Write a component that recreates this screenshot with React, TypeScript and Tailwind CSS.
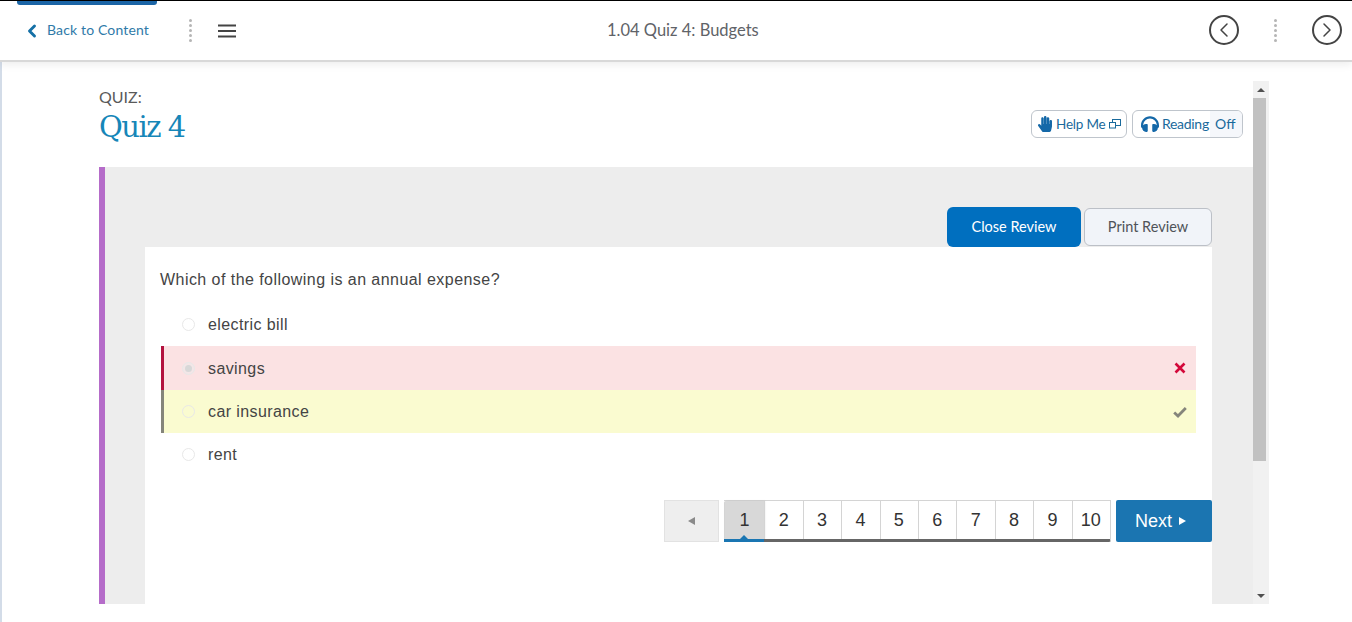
import { ChevronLeft, ChevronRight } from "lucide-react";
import { FaHandPaper, FaHeadphones } from "react-icons/fa";

const pages = ["1", "2", "3", "4", "5", "6", "7", "8", "9", "10"];

function Radio({ checked }: { checked?: boolean }) {
  return (
    <span className={`w-[13px] h-[13px] rounded-full border border-[#e8e8e8] flex items-center justify-center shrink-0 ${checked ? "bg-[#f3e6e7]" : ""}`}>
      {checked && <span className="w-[7px] h-[7px] rounded-full bg-[#d8d8d8]" />}
    </span>
  );
}

function Dots() {
  return (
    <div className="flex flex-col gap-[2px]">
      {[0, 1, 2, 3, 4].map((i) => (
        <span key={i} className="w-[3px] h-[3px] rounded-full bg-[#b5b5b5]" />
      ))}
    </div>
  );
}

function Option({ label, tone, checked, mark, className }: { label: string; tone?: "wrong" | "right"; checked?: boolean; mark?: React.ReactNode; className?: string }) {
  const cls =
    tone === "wrong"
      ? "bg-[#fbe2e3] border-l-[3px] border-[#b3123f] pr-[10px]"
      : tone === "right"
        ? "bg-[#fafbd0] border-l-[3px] border-[#85857b] pr-[9px]"
        : "border-l-[3px] border-transparent pr-[10px]";
  return (
    <div className={`flex items-center pl-[18px] ${cls} ${className ?? "h-[43px]"}`}>
      <Radio checked={checked} />
      <span className={`ml-[13px] text-[16px] text-[#444] tracking-[0.4px] ${tone === "wrong" ? "pt-[2px]" : ""}`}>{label}</span>
      <span className="ml-auto">{mark}</span>
    </div>
  );
}

export default function App() {
  return (
    <div className="w-[1352px] h-[622px] overflow-hidden bg-white flex flex-col font-['Liberation_Sans',sans-serif]">
      {/* Top bar */}
      <header className="relative h-[62px] shrink-0 border-t border-black border-b-2 border-b-[#d8d8d8] flex items-center font-['Lato',sans-serif] shadow-[0_3px_8px_rgba(0,0,0,0.07)]">
        <div className="absolute left-[17px] top-0 w-[140px] h-[4px] bg-[#1b65a6] rounded-b-[3px]" />
        <div className="ml-[22px] flex items-center text-[#2f7aa8] text-[14px]">
          <ChevronLeft className="w-[20px] h-[20px] text-[#1570a6]" strokeWidth={3.5} />
          <span className="ml-[5px] tracking-[0.15px] -mt-[3px]">Back to Content</span>
        </div>
        <div className="ml-[40px]">
          <Dots />
        </div>
        <svg className="ml-[26px]" width="18" height="14" viewBox="0 0 18 14" stroke="#444" strokeWidth="2">
          <path d="M0 1.5H18M0 7H18M0 12.5H18" />
        </svg>
        <div className="absolute left-[607px] top-[18px] text-[16.5px] leading-[22px] text-[#5f6368]">1.04 Quiz 4: Budgets</div>
        <div className="ml-auto flex items-center mr-[10px] -mt-[1px]">
          <div className="w-[30px] h-[30px] rounded-full border-2 border-[#444] flex items-center justify-center">
            <ChevronLeft className="w-[24px] h-[24px] text-[#444]" strokeWidth={1.5} />
          </div>
          <div className="mx-[35px]">
            <Dots />
          </div>
          <div className="w-[30px] h-[30px] rounded-full border-2 border-[#444] flex items-center justify-center">
            <ChevronRight className="w-[24px] h-[24px] text-[#444]" strokeWidth={1.5} />
          </div>
        </div>
      </header>

      {/* Body */}
      <div className="flex-1 flex border-l-2 border-[#d3dce8] pt-[19px] pb-[18px] pl-[97px] pr-[83px] min-h-0">
        <div className="flex-1 min-w-0 flex flex-col">
          {/* Title row */}
          <div className="h-[86px] shrink-0 flex">
            <div className="pt-[6px]">
              <div className="text-[16px] leading-[19px] text-[#5a5a5a] font-['Lato',sans-serif]">QUIZ:</div>
              <h1 className="mt-[2px] text-[29px] leading-[38px] text-[#1686b8] font-['DejaVu_Serif',serif] tracking-[-1.5px]">Quiz 4</h1>
            </div>
            <div className="ml-auto mr-[10px] mt-[29px] flex gap-[5px] font-['Lato',sans-serif] text-[#1a6a9c]">
              <div className="h-[28px] w-[96px] rounded-[6px] border border-[#bfc5cc] flex items-center pl-[5px] text-[13.5px]">
                <FaHandPaper className="w-[16px] h-[16px] text-[#1468a8]" />
                <span className="ml-[3px] tracking-[-0.2px]">Help Me</span>
                <svg className="ml-[3px]" width="12" height="10" viewBox="0 0 12 10" fill="none" stroke="#1a6a9c" strokeWidth="1">
                  <rect x="3.5" y="0.5" width="8" height="6" />
                  <rect x="0.5" y="3.5" width="6" height="5.5" fill="white" />
                </svg>
              </div>
              <div className="h-[28px] w-[111px] rounded-[6px] border border-[#bfc5cc] flex items-center pl-[8px] overflow-hidden text-[14px]">
                <FaHeadphones className="w-[18px] h-[18px] text-[#1468a8]" />
                <span className="ml-[3px] tracking-[-0.3px] -mt-[2px]">Reading</span>
                <span className="ml-auto h-full w-[32px] bg-[#f5f7fb] flex items-center pl-[5px] pb-[2px]">Off</span>
              </div>
            </div>
          </div>

          {/* Quiz panel */}
          <div className="flex-1 min-h-0 bg-[#ededed] border-l-[6px] border-[#b56cc9] pl-[40px] pr-[41px] pt-[40px] flex flex-col">
            <div className="flex justify-end items-start h-[40px] shrink-0 font-['Lato',sans-serif] text-[14.5px]">
              <div className="w-[134px] h-[40px] rounded-[6px] bg-[#006fbf] text-white flex items-center justify-center pb-[1px]">Close Review</div>
              <div className="ml-[3px] mt-[1px] w-[128px] h-[38px] rounded-[6px] border border-[#bcc0c7] bg-[#f1f4f9] text-[#4f5358] flex items-center justify-center pb-[1px]">Print Review</div>
            </div>
            <div className="flex-1 bg-white pl-[15px] pt-[22px]">
              <p className="text-[16px] leading-[22px] text-[#444] tracking-[0.45px]">Which of the following is an annual expense?</p>
              <div className="mt-[12px] pl-[1px] pr-[16px] flex flex-col">
                <Option label="electric bill" />
                <Option
                  label="savings"
                  tone="wrong"
                  checked
                  className="h-[44px]"
                  mark={
                    <svg width="12" height="12" viewBox="0 0 12 12" stroke="#d3083a" strokeWidth="2.6" className="block">
                      <path d="M1.5 1.5 10.5 10.5M10.5 1.5 1.5 10.5" />
                    </svg>
                  }
                />
                <Option
                  label="car insurance"
                  tone="right"
                  mark={
                    <svg width="14" height="12" viewBox="0 0 14 12" fill="none" stroke="#85857b" strokeWidth="2.8" className="block">
                      <path d="M1.2 6.4 5 10 12.8 2" />
                    </svg>
                  }
                />
                <Option label="rent" />
              </div>

              {/* Pagination */}
              <div className="mt-[24px] flex justify-end">
                <div className="w-[55px] h-[42px] bg-[#eee] border border-[#e2e2e2] flex items-center justify-center pr-[1px]">
                  <span className="w-0 h-0 border-y-[4px] border-y-transparent border-r-[7px] border-r-[#8a8a8a]" />
                </div>
                <div className="relative ml-[5px] flex h-[42px] border-t border-r border-[#d4d4d4] border-b-[3px] border-b-[#666] rounded-b-[2px]">
                  {pages.map((p, i) => (
                    <div
                      key={p}
                      className={`flex items-center justify-center text-[18px] text-[#333] border-l border-[#d4d4d4] pt-[1px] pr-[1px] ${i === 0 ? "bg-[#d8d8d8] w-[40px] rounded-tl-[2px] shadow-[1px_0_2px_rgba(0,0,0,0.12)]" : "w-[38.4px]"}`}
                    >
                      {p}
                    </div>
                  ))}
                  <span className="absolute left-0 -bottom-[3px] w-[40px] h-[3px] bg-[#1a76b2]" />
                  <span className="absolute left-[16px] bottom-0 w-0 h-0 border-x-[4px] border-x-transparent border-b-[4px] border-b-[#1a76b2]" />
                </div>
                <div className="ml-[5px] w-[96px] h-[42px] rounded-[2px] bg-[#1b75b1] text-white text-[18px] flex items-center pl-[19px]">
                  Next
                  <span className="ml-[7px] w-0 h-0 border-y-[4px] border-y-transparent border-l-[7px] border-l-white" />
                </div>
              </div>
            </div>
          </div>
        </div>

        {/* Scrollbar */}
        <div className="w-[16px] shrink-0 bg-[#f1f1f1] flex flex-col items-center">
          <div className="h-[17px] w-full flex items-center justify-center">
            <span className="w-0 h-0 border-x-[4px] border-x-transparent border-b-[4px] border-b-[#505050]" />
          </div>
          <div className="h-[363px] w-[13px] self-start bg-[#c1c1c1]" />
          <div className="mt-auto h-[17px] w-full flex items-center justify-center">
            <span className="w-0 h-0 border-x-[4px] border-x-transparent border-t-[4px] border-t-[#505050]" />
          </div>
        </div>
      </div>
    </div>
  );
}
